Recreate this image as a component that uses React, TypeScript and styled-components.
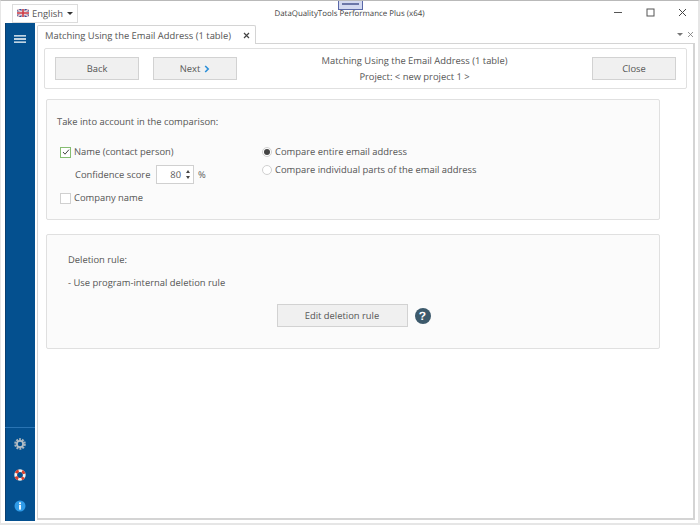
import React from "react";
import styled, { createGlobalStyle } from "styled-components";

const GlobalStyle = createGlobalStyle`
  html, body {
    margin: 0;
    padding: 0;
    background: #fff;
  }
  * {
    box-sizing: border-box;
  }
`;

const Window = styled.div`
  position: relative;
  width: 700px;
  height: 525px;
  display: flex;
  flex-direction: column;
  background: #fff;
  border: solid #e6e6e6;
  border-width: 1px 2px 2px 1px;
  border-top-color: #b9b9b9;
  font-family: "Open Sans", "Noto Sans", sans-serif;
  font-size: 9.4px;
  text-rendering: geometricPrecision;
  color: #555;
  overflow: hidden;
`;

const SnapHandle = styled.div`
  position: absolute;
  top: -1px;
  left: 337px;
  width: 25px;
  height: 10px;
  background: #d3d9f0;
  border: 1px solid #5a68a8;
  border-top: 0;
  display: flex;
  justify-content: center;
  padding-top: 3px;

  &::after {
    content: "";
    width: 17px;
    height: 2px;
    background: #6b76a8;
  }
`;

const TitleBar = styled.div`
  height: 22px;
  display: flex;
  align-items: center;
  padding: 0 11px;
  flex-shrink: 0;
`;

const LangButton = styled.div`
  width: 66px;
  height: 19px;
  margin-top: 2px;
  border: 1px solid #dcdcdc;
  display: flex;
  align-items: center;
  padding: 0 4px;
  gap: 3px;
  color: #555;
  flex-shrink: 0;
  white-space: nowrap;
`;

const Caret = styled.span`
  width: 0;
  height: 0;
  margin-left: auto;
  border-left: 3px solid transparent;
  border-right: 3px solid transparent;
  border-top: 3px solid #333;
`;

const AppTitle = styled.div`
  flex: 1;
  text-align: center;
  font-size: 7.9px;
  color: #444;
  padding-left: 7px;
  padding-top: 3px;
`;

const WindowButtons = styled.div`
  display: flex;
  gap: 23px;
  align-items: center;
  padding-top: 1px;
`;

const Body = styled.div`
  flex: 1;
  display: flex;
  padding: 0 3px 2px 4px;
  min-height: 0;
`;

const Sidebar = styled.div`
  width: 30px;
  background: #04508f;
  box-shadow: inset 1px 0 #0a3f70;
  display: flex;
  flex-direction: column;
  align-items: center;
  padding: 12px 0 9px;
`;

const SideSpacer = styled.div`
  flex: 1;
`;

const SideIcons = styled.div`
  width: 100%;
  border-top: 1px solid #2a74b3;
  display: flex;
  flex-direction: column;
  align-items: center;
  gap: 19px;
  padding-top: 10px;
`;

const Main = styled.div`
  flex: 1;
  margin: 0 0 1px 2px;
  display: flex;
  flex-direction: column;
  min-width: 0;
`;

const TabStrip = styled.div`
  height: 19px;
  margin-top: 2px;
  display: flex;
  justify-content: space-between;
  align-items: flex-start;
  border-bottom: 1px solid #d4d4d4;
`;

const Tab = styled.div`
  width: 219px;
  height: 19px;
  background: #fff;
  border: 1px solid #d4d4d4;
  border-bottom: 0;
  border-radius: 2px 2px 0 0;
  display: flex;
  align-items: center;
  justify-content: space-between;
  padding: 0 5px 0 7px;
  white-space: nowrap;
  color: #555;
`;

const TabActions = styled.div`
  display: flex;
  align-items: center;
  gap: 4px;
  padding-top: 6px;
  padding-right: 1px;
`;

const SmallCaret = styled(Caret)`
  border-top-color: #777;
`;

const Content = styled.div`
  flex: 1;
  border: 1px solid #d4d4d4;
  border-top: 0;
  border-right-width: 2px;
  border-bottom-width: 2px;
  padding: 4px 6px 0 6px;
  min-height: 0;
`;

const Card = styled.div`
  background: #fbfbfb;
  border: 1px solid #e0e0e0;
  border-radius: 2px;
`;

const ToolbarCard = styled(Card)`
  height: 41px;
  background: #fff;
  display: flex;
  align-items: center;
  padding: 0 10px;
`;

const Button = styled.div<{ $w: number }>`
  width: ${(p) => p.$w}px;
  height: 23px;
  background: #f0f0f0;
  border: 1px solid #d2d2d2;
  display: flex;
  align-items: center;
  justify-content: center;
  gap: 4px;
  color: #555;
  flex-shrink: 0;
`;

const NextButton = styled(Button)`
  margin-left: 14px;
`;

const ToolbarTitle = styled.div`
  flex: 1;
  text-align: center;
  line-height: 15.5px;
  color: #555;
`;

const OptionsCard = styled(Card)`
  width: 614px;
  height: 121px;
  margin: 10px 0 0 2px;
  padding: 15px 10px 0 10px;
`;

const OptionsRow = styled.div`
  display: flex;
  margin-top: 16px;
  padding-left: 3px;
`;

const Label = styled.div`
  line-height: 14px;
  color: #555;
  white-space: nowrap;
`;

const CheckColumn = styled.div`
  width: 202px;
  display: flex;
  flex-direction: column;
`;

const RadioColumn = styled.div`
  display: flex;
  flex-direction: column;
  gap: 4px;
`;

const CheckRow = styled.div`
  display: flex;
  align-items: center;
  gap: 3px;
  height: 14px;
`;

const CheckBox = styled.span<{ $checked?: boolean }>`
  width: 11px;
  height: 11px;
  background: #fff;
  border: 1px solid ${(p) => (p.$checked ? "#86bd72" : "#d0d0d0")};
  display: inline-flex;
  align-items: center;
  justify-content: center;
`;

const ScoreRow = styled.div`
  display: flex;
  align-items: center;
  margin: 6px 0 7px 15px;
  height: 19px;
`;

const ScoreLabel = styled(Label)`
  width: 74px;
`;

const Spinner = styled.div`
  width: 38px;
  height: 19px;
  margin: 0 4px 0 7px;
  background: #fff;
  border: 1px solid #d0d0d0;
  display: flex;
  align-items: center;
  justify-content: flex-end;
  gap: 5px;
  padding-right: 3px;
  color: #555;
`;

const SpinArrows = styled.div`
  display: flex;
  flex-direction: column;
  gap: 3px;
`;

const SpinArrow = styled.span<{ $up?: boolean }>`
  width: 0;
  height: 0;
  border-left: 2.5px solid transparent;
  border-right: 2.5px solid transparent;
  ${(p) =>
    p.$up ? "border-bottom: 3px solid #444;" : "border-top: 3px solid #444;"}
`;

const RadioRow = styled.div`
  display: flex;
  align-items: center;
  gap: 3px;
  height: 14px;
`;

const Radio = styled.span<{ $on?: boolean }>`
  width: 10px;
  height: 10px;
  border-radius: 50%;
  background: #fff;
  border: 1px solid #d0d0d0;
  display: inline-flex;
  align-items: center;
  justify-content: center;

  &::after {
    content: "";
    width: 6px;
    height: 6px;
    border-radius: 50%;
    background: ${(p) => (p.$on ? "#444" : "transparent")};
  }
`;

const RuleCard = styled(Card)`
  width: 614px;
  height: 115px;
  margin: 14px 0 0 2px;
  padding: 18px 21px 0;
  display: flex;
  flex-direction: column;
`;

const RuleLine = styled(Label)`
  margin-top: 9px;
`;

const RuleActions = styled.div`
  display: flex;
  align-items: center;
  justify-content: center;
  gap: 7px;
  margin-top: 14px;
  padding-left: 1px;
`;

const HelpIcon = styled.div`
  width: 16px;
  height: 16px;
  border-radius: 50%;
  background: #3d5a6c;
  color: #fff;
  font-family: "Liberation Sans", sans-serif;
  font-weight: 700;
  font-size: 12px;
  display: flex;
  align-items: center;
  justify-content: center;
`;

const UkFlag = () => (
  <svg width="12" height="8" viewBox="0 0 12 8">
    <rect width="12" height="8" fill="#3c4f96" />
    <path d="M0 0L12 8M12 0L0 8" stroke="#e9c8cc" strokeWidth="1.6" />
    <path d="M6 0V8M0 4H12" stroke="#e9dfe2" strokeWidth="3" />
    <path d="M6 0V8M0 4H12" stroke="#cf3a45" strokeWidth="1.6" />
  </svg>
);

const Gear = () => (
  <svg width="12" height="12" viewBox="0 0 12 12">
    <circle
      cx="6"
      cy="6"
      r="4.7"
      fill="none"
      stroke="#a9b4bd"
      strokeWidth="2.2"
      strokeDasharray="1.9 1.05"
    />
    <circle cx="6" cy="6" r="3.1" fill="none" stroke="#b4bec6" strokeWidth="1.8" />
  </svg>
);

const LifeRing = () => (
  <svg width="12" height="12" viewBox="0 0 12 12">
    <circle cx="6" cy="6" r="4.3" fill="none" stroke="#f4f1ee" strokeWidth="2.8" />
    <circle
      cx="6"
      cy="6"
      r="4.3"
      fill="none"
      stroke="#d8402c"
      strokeWidth="2.8"
      strokeDasharray="3.4 3.35"
      strokeDashoffset="1.7"
      transform="rotate(45 6 6)"
    />
  </svg>
);

const InfoDot = () => (
  <svg width="12" height="12" viewBox="0 0 12 12">
    <circle cx="6" cy="6" r="5.5" fill="#2f9be8" />
    <rect x="5.1" y="2.4" width="1.8" height="1.6" fill="#fff" />
    <rect x="5.1" y="4.8" width="1.8" height="4.8" fill="#fff" />
  </svg>
);

const App = () => {
  return (
    <>
      <GlobalStyle />
      <Window>
        <SnapHandle />
        <TitleBar>
          <LangButton>
            <UkFlag />
            English
            <Caret />
          </LangButton>
          <AppTitle>DataQualityTools Performance Plus (x64)</AppTitle>
          <WindowButtons>
            <svg width="9" height="9" viewBox="0 0 9 9">
              <path d="M0 4.5H8" stroke="#555" strokeWidth="1" />
            </svg>
            <svg width="9" height="9" viewBox="0 0 9 9">
              <rect x="1" y="1" width="7" height="7" fill="none" stroke="#555" />
            </svg>
            <svg width="9" height="9" viewBox="0 0 9 9">
              <path d="M1 1L8 8M8 1L1 8" stroke="#444" strokeWidth="1" />
            </svg>
          </WindowButtons>
        </TitleBar>
        <Body>
          <Sidebar>
            <svg width="12" height="8" viewBox="0 0 12 8">
              <path d="M0 .8H12M0 4H12M0 7.2H12" stroke="#fff" strokeWidth="1.3" />
            </svg>
            <SideSpacer />
            <SideIcons>
              <Gear />
              <LifeRing />
              <InfoDot />
            </SideIcons>
          </Sidebar>
          <Main>
            <TabStrip>
              <Tab>
                Matching Using the Email Address (1 table)
                <svg width="7" height="7" viewBox="0 0 7 7">
                  <path d="M1 1L6 6M6 1L1 6" stroke="#444" strokeWidth="1.2" />
                </svg>
              </Tab>
              <TabActions>
                <SmallCaret />
                <svg width="7" height="7" viewBox="0 0 7 7">
                  <path d="M1 1L6 6M6 1L1 6" stroke="#777" strokeWidth="0.8" />
                </svg>
              </TabActions>
            </TabStrip>
            <Content>
              <ToolbarCard>
                <Button $w={84}>Back</Button>
                <NextButton $w={84}>
                  Next
                  <svg width="6" height="8" viewBox="0 0 6 8">
                    <path
                      d="M1.2 1L4.2 4L1.2 7"
                      fill="none"
                      stroke="#2b8fd8"
                      strokeWidth="1.6"
                    />
                  </svg>
                </NextButton>
                <ToolbarTitle>
                  Matching Using the Email Address (1 table)
                  <br />
                  Project: &lt; new project 1 &gt;
                </ToolbarTitle>
                <Button $w={84}>Close</Button>
              </ToolbarCard>
              <OptionsCard>
                <Label>Take into account in the comparison:</Label>
                <OptionsRow>
                  <CheckColumn>
                    <CheckRow>
                      <CheckBox $checked>
                        <svg width="8" height="8" viewBox="0 0 8 8">
                          <path
                            d="M1 4L3 6.2L7 1.6"
                            fill="none"
                            stroke="#444"
                            strokeWidth="1"
                          />
                        </svg>
                      </CheckBox>
                      <Label>Name (contact person)</Label>
                    </CheckRow>
                    <ScoreRow>
                      <ScoreLabel>Confidence score</ScoreLabel>
                      <Spinner>
                        80
                        <SpinArrows>
                          <SpinArrow $up />
                          <SpinArrow />
                        </SpinArrows>
                      </Spinner>
                      <Label>%</Label>
                    </ScoreRow>
                    <CheckRow>
                      <CheckBox />
                      <Label>Company name</Label>
                    </CheckRow>
                  </CheckColumn>
                  <RadioColumn>
                    <RadioRow>
                      <Radio $on />
                      <Label>Compare entire email address</Label>
                    </RadioRow>
                    <RadioRow>
                      <Radio />
                      <Label>Compare individual parts of the email address</Label>
                    </RadioRow>
                  </RadioColumn>
                </OptionsRow>
              </OptionsCard>
              <RuleCard>
                <Label>Deletion rule:</Label>
                <RuleLine>- Use program-internal deletion rule</RuleLine>
                <RuleActions>
                  <Button $w={131}>Edit deletion rule</Button>
                  <HelpIcon>?</HelpIcon>
                </RuleActions>
              </RuleCard>
            </Content>
          </Main>
        </Body>
      </Window>
    </>
  );
};

export default App;
